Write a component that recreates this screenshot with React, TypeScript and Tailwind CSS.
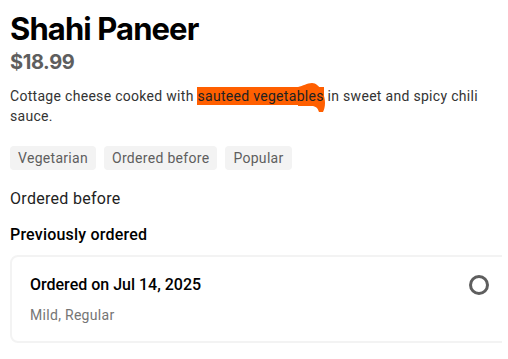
export default function App() {
  return (
    <div className="w-[508px] h-[359px] overflow-hidden bg-white font-['Roboto',sans-serif] text-black">
      <div className="pl-[10px] pt-[9px]">
        <h1 className="font-['Inter',sans-serif] text-[31px] font-bold leading-[40px] tracking-[-0.9px]">Shahi Paneer</h1>
        <div className="mt-[1px] font-['Inter',sans-serif] text-[20px] font-bold leading-[24px] tracking-[-0.4px] text-[#5e5e5e]">$18.99</div>
        <p className="mt-[12px] pr-[20px] text-[14px] leading-[20px] tracking-[0.3px] text-[#333]">
          Cottage cheese cooked with{" "}
          <span className="relative bg-[#ff5f00] py-[1px]">
            <svg
              className="absolute right-[-4px] top-[-4px] h-[30px] w-[30px] overflow-visible"
              viewBox="0 0 30 30"
            >
              {/* marker scribble tail */}
              <path
                d="M0 4 C5 3 9 0 14 0 C18 0 21 3 24 8 C26 12 27 16 27 20 C27 24 26 27 25 29 L21 29 C20 26 19 24 15 23 L0 23 Z"
                fill="#ff5f00"
              />
            </svg>
            <span className="relative text-[#222]">sauteed vegetables</span>
          </span>{" "}
          in sweet and spicy chili sauce.
        </p>
        <div className="mt-[20px] flex gap-2 text-[14px] leading-[24px] tracking-[0.3px] text-[#5e5e5e]">
          <span className="rounded-[4px] bg-[#f3f3f3] px-2">Vegetarian</span>
          <span className="rounded-[4px] bg-[#f3f3f3] px-2">Ordered before</span>
          <span className="rounded-[4px] bg-[#f3f3f3] px-2">Popular</span>
        </div>
        <div className="mt-[17px] text-[16px] leading-[24px] tracking-[0.3px] text-[#222]">Ordered before</div>
        <div className="mt-[12px] text-[16px] font-medium leading-[24px] tracking-[0.2px]">Previously ordered</div>
        <div className="mt-[8px] w-[492px] overflow-hidden">
          <div className="flex w-[510px] items-start justify-between rounded-[8px] border-2 border-[#f3f3f3] pl-[18px] pr-[29px] pt-[16px] pb-[16px]">
            <div>
              <div className="text-[16px] font-medium leading-[24px]">Ordered on Jul 14, 2025</div>
              <div className="mt-[8px] text-[14px] leading-[20px] tracking-[0.3px] text-[#757575]">Mild, Regular</div>
            </div>
            <div className="mt-[2px] h-[20px] w-[20px] rounded-full border-[3px] border-[#5e5e5e]" />
          </div>
        </div>
      </div>
    </div>
  );
}
